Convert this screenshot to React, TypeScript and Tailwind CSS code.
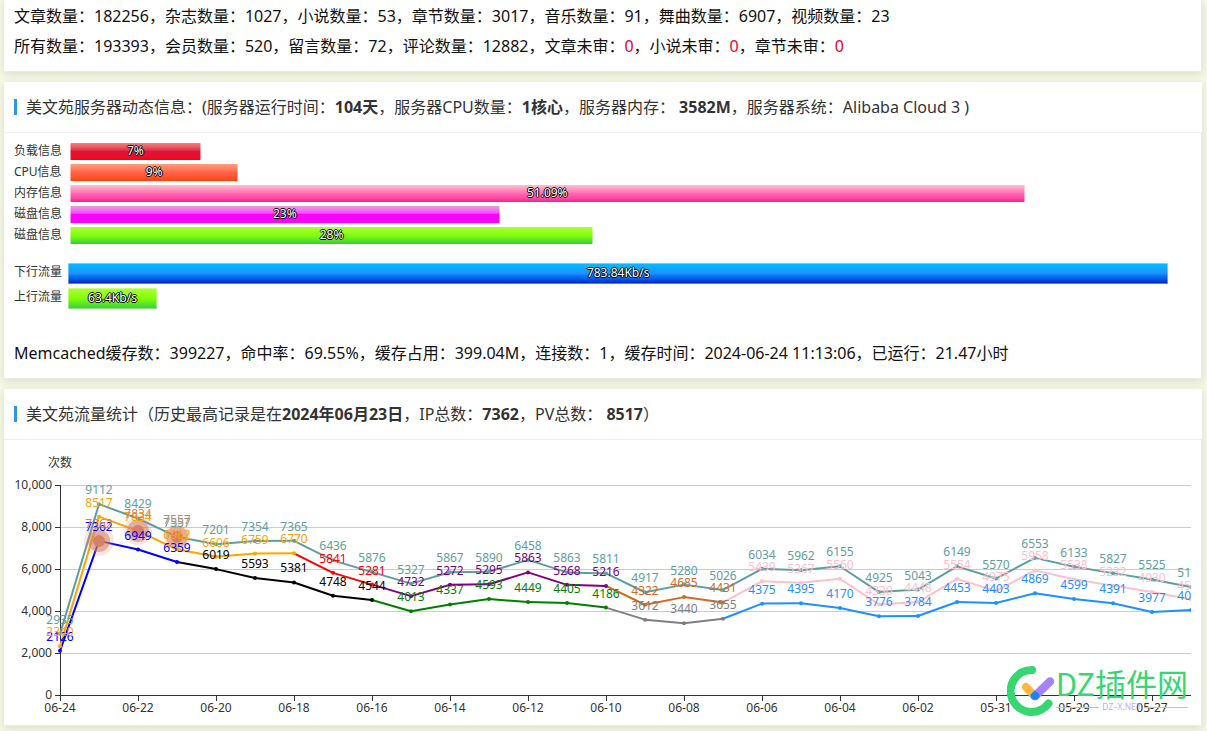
import React from "react";

interface Bar {
  label: string;
  text: string;
  value: number;
  color: string;
}

const loadBars: Bar[] = [
  { label: "负载信息", text: "7%", value: 7, color: "from-[#f08080] via-[#dc143c] to-[#ff0000]" },
  { label: "CPU信息", text: "9%", value: 9, color: "from-[#ffa07a] via-[#ff6347] to-[#ff4500]" },
  { label: "内存信息", text: "51.09%", value: 51.09, color: "from-[#ffc0cb] via-[#ff69b4] to-[#ff1493]" },
  { label: "磁盘信息", text: "23%", value: 23, color: "from-[#dda0dd] via-[#ff00ff] to-[#ff00ff]" },
  { label: "磁盘信息", text: "28%", value: 28, color: "from-[#adff2f] via-[#7fff00] to-[#32cd32]" },
];

const trafficBars: Bar[] = [
  { label: "下行流量", text: "783.84Kb/s", value: 783.84, color: "from-[#00bfff] via-[#1e90ff] to-[#0000cd]" },
  { label: "上行流量", text: "63.4Kb/s", value: 63.4, color: "from-[#adff2f] via-[#7fff00] to-[#32cd32]" },
];

const outline =
  "[text-shadow:1px_0_0_#000,-1px_0_0_#000,0_1px_0_#000,0_-1px_0_#000]";

// Chart data, newest day first
const total = [
  2935, 9112, 8429, 7557, 7201, 7354, 7365, 6436, 5876, 5327, 5867, 5890, 6458,
  5863, 5811, 4917, 5280, 5026, 6034, 5962, 6155, 4925, 5043, 6149, 5570, 6553,
  6133, 5827, 5525, 5165,
];
const pv = total.map((v) => v - 595);
const ip = [
  2126, 7362, 6949, 6359, 6019, 5593, 5381, 4748, 4544, 4013, 4337, 4593, 4449,
  4405, 4186, 3612, 3440, 3655, 4375, 4395, 4170, 3776, 3784, 4453, 4403, 4869,
  4599, 4391, 3977, 4076,
];
const days = [
  "06-24", "06-22", "06-20", "06-18", "06-16", "06-14", "06-12", "06-10",
  "06-08", "06-06", "06-04", "06-02", "05-31", "05-29", "05-27",
];
const peaks = [
  { day: 1, value: 7362, ripple: 15 },
  { day: 2, value: 7834, ripple: 14 },
  { day: 3, value: 7557, ripple: 13 },
];

const ipColor = (i: number) => {
  if (i <= 3) return "blue";
  if (i <= 8) return "black";
  if (i <= 14) return "green";
  if (i <= 17) return "gray";
  return "dodgerblue";
};
const pvColor = (i: number) => {
  if (i <= 6) return "orange";
  if (i <= 8) return "red";
  if (i <= 14) return "purple";
  if (i <= 17) return "chocolate";
  return "pink";
};
const totalColor = () => "cadetblue";

const series = [
  { name: "ip", data: ip, color: ipColor },
  { name: "pv", data: pv, color: pvColor },
  { name: "total", data: total, color: totalColor },
];

const xOf = (i: number) => 46 + i * 39;
const yOf = (v: number) => 255.5 - v * 0.021;

const Card: React.FC<{ title?: React.ReactNode; children: React.ReactNode }> = ({
  title,
  children,
}) => (
  <section className="bg-white shadow-[0_2px_8px_rgba(0,0,0,0.12)]">
    {title && (
      <header className="flex h-[51px] items-center gap-[9px] border-b border-[#eee] px-[10px]">
        <span className="h-4 w-[3px] bg-[#2d98e4]" />
        <h2 className="text-base text-[#333]">{title}</h2>
      </header>
    )}
    <div className="border-r border-b border-[#ebebeb] px-[10px]">{children}</div>
  </section>
);

const LoadRow: React.FC<{ bar: Bar }> = ({ bar }) => (
  <div className="flex h-[17px] items-start text-xs">
    <span className="w-14 shrink-0 text-[#333]">{bar.label}</span>
    <div className="flex-1">
      <div
        className={`flex h-[17px] items-start justify-center rounded-[1px] border-x border-white/50 bg-linear-to-b text-white ${outline} ${bar.color}`}
        style={{ width: `${bar.value / 0.6}%` }}
      >
        {bar.text}
      </div>
    </div>
  </div>
);

const TrafficRow: React.FC<{ bar: Bar }> = ({ bar }) => (
  <div className="flex h-[21px] items-start text-xs leading-[18px]">
    <span className="w-[54px] shrink-0 text-[#333]">{bar.label}</span>
    <div className="flex-1">
      <div
        className={`flex h-[21px] items-start justify-center rounded-[1px] border border-white/40 bg-linear-to-b bg-origin-border text-white ${outline} ${bar.color}`}
        style={{ width: `${bar.value / 8}%` }}
      >
        {bar.text}
      </div>
    </div>
  </div>
);

const TrafficChart: React.FC = () => (
  <svg className="block h-[285px] w-full overflow-hidden" fontSize="12">
    <text x="46" y="27" textAnchor="middle" fill="#333">
      次数
    </text>
    {[0, 2000, 4000, 6000, 8000, 10000].map((v) => (
      <g key={v}>
        {v > 0 && <line x1="46" x2="100%" y1={yOf(v)} y2={yOf(v)} stroke="#ccc" />}
        <line x1="41" x2="46" y1={yOf(v)} y2={yOf(v)} stroke="#333" />
        <text x="38" y={yOf(v) + 3} textAnchor="end" fill="#333">
          {v.toLocaleString("en-US")}
        </text>
      </g>
    ))}
    <line x1="46.5" x2="46.5" y1="45" y2="256" stroke="#333" />
    <line x1="46" x2="100%" y1="255.5" y2="255.5" stroke="#333" />
    {days.map((day, i) => (
      <g key={day}>
        <line x1={xOf(i * 2) + 0.5} x2={xOf(i * 2) + 0.5} y1="256" y2="261" stroke="#333" />
        <text x={xOf(i * 2)} y="272" textAnchor="middle" fill="#333">
          {day}
        </text>
      </g>
    ))}

    {series.map(({ name, data, color }) => (
      <g key={name}>
        {data.slice(1).map((v, i) => (
          <line
            key={i}
            x1={xOf(i)}
            y1={yOf(data[i])}
            x2={xOf(i + 1)}
            y2={yOf(v)}
            stroke={color(i + 1)}
            strokeWidth="2"
            strokeLinecap="round"
          />
        ))}
        {data.map((v, i) => (
          <circle key={i} cx={xOf(i)} cy={yOf(v)} r="2" fill={color(i)} />
        ))}
      </g>
    ))}

    {peaks.map(({ day, value, ripple }) => (
      <g key={day} fill="#d48265">
        <circle cx={xOf(day)} cy={yOf(value)} r={ripple} opacity="0.2" />
        <circle cx={xOf(day)} cy={yOf(value)} r="11" opacity="0.55" />
        <circle cx={xOf(day)} cy={yOf(value)} r="6" />
      </g>
    ))}

    {series.map(({ name, data, color }) => (
      <g key={name} textAnchor="middle">
        {data.map((v, i) => (
          <text key={i} x={xOf(i)} y={yOf(v) - 10} fill={color(i)}>
            {v}
          </text>
        ))}
      </g>
    ))}
    {peaks.map(({ day, value }) => (
      <text key={day} x={xOf(day)} y={yOf(value) - 13} textAnchor="middle" fill="#d48265">
        {value}
      </text>
    ))}
  </svg>
);

const Watermark: React.FC = () => (
  <div className="pointer-events-none absolute right-[3px] bottom-[8px] flex items-start gap-px font-['Noto_Sans_CJK_SC',sans-serif]">
    <svg className="h-[52px] w-12" viewBox="0 0 48 52" fill="none" strokeLinecap="round">
      <path d="M25 5A21 21 0 1 0 41.5 38.5" stroke="#36d672" strokeWidth="8" />
      <path d="M19 22L27.500 31" stroke="#ffb83d" strokeWidth="8" />
      <path d="M43 16.500L28 31" stroke="#a583ff" strokeWidth="8.500" />
      <path d="M28 25.500L32.500 29.500A4.500 4.500 0 0 1 28 35A4.500 4.500 0 0 1 23.500 29.500Z" fill="#1685ff" />
    </svg>
    <div>
      <div className="text-[31px] leading-[36px] text-[#36d672]">DZ插件网</div>
      <div className="flex items-center gap-[3px] text-[9px] leading-3 font-light text-[#a583ff]">
        <span className="h-px flex-1 bg-[#c9b6ff]" />
        DZ–X.NET
        <span className="h-px flex-1 bg-[#c9b6ff]" />
      </div>
    </div>
  </div>
);

const App: React.FC = () => (
  <main className="flex min-h-screen flex-col gap-[10px] bg-[#f5f9e4] pr-[5px] pl-1 font-['Noto_Sans','Noto_Sans_CJK_SC',sans-serif] text-base">
    <Card>
      <div className="pt-px pb-[10px] leading-[30px] text-[#111]">
        <p>
          文章数量：182256，杂志数量：1027，小说数量：53，章节数量：3017，音乐数量：91，舞曲数量：6907，视频数量：23
        </p>
        <p>
          所有数量：193393，会员数量：520，留言数量：72，评论数量：12882，文章未审：
          <span className="text-[#e6002d]">0</span>，小说未审：
          <span className="text-[#e6002d]">0</span>，章节未审：
          <span className="text-[#e6002d]">0</span>
        </p>
      </div>
    </Card>

    <Card
      title={
        <>
          美文苑服务器动态信息：(服务器运行时间：<b>104天</b>，服务器CPU数量：
          <b>1核心</b>，服务器内存： <b>3582M</b>，服务器系统：Alibaba Cloud 3 )
        </>
      }
    >
      <div className="flex flex-col gap-1 pt-[10px]">
        {loadBars.map((bar, i) => (
          <LoadRow key={i} bar={bar} />
        ))}
      </div>
      <div className="flex flex-col gap-1 pt-[19px]">
        {trafficBars.map((bar) => (
          <TrafficRow key={bar.label} bar={bar} />
        ))}
      </div>
      <p className="pt-[29px] pb-[10px] leading-[30px] text-[#111]">
        Memcached缓存数：399227，命中率：69.55%，缓存占用：399.04M，连接数：1，缓存时间：2024-06-24
        11:13:06，已运行：21.47小时
      </p>
    </Card>

    <Card
      title={
        <>
          美文苑流量统计（历史最高记录是在<b>2024年06月23日</b>，IP总数：<b>7362</b>
          ，PV总数： <b>8517</b>）
        </>
      }
    >
      <div className="relative">
        <TrafficChart />
        <Watermark />
      </div>
    </Card>
  </main>
);

export default App;
